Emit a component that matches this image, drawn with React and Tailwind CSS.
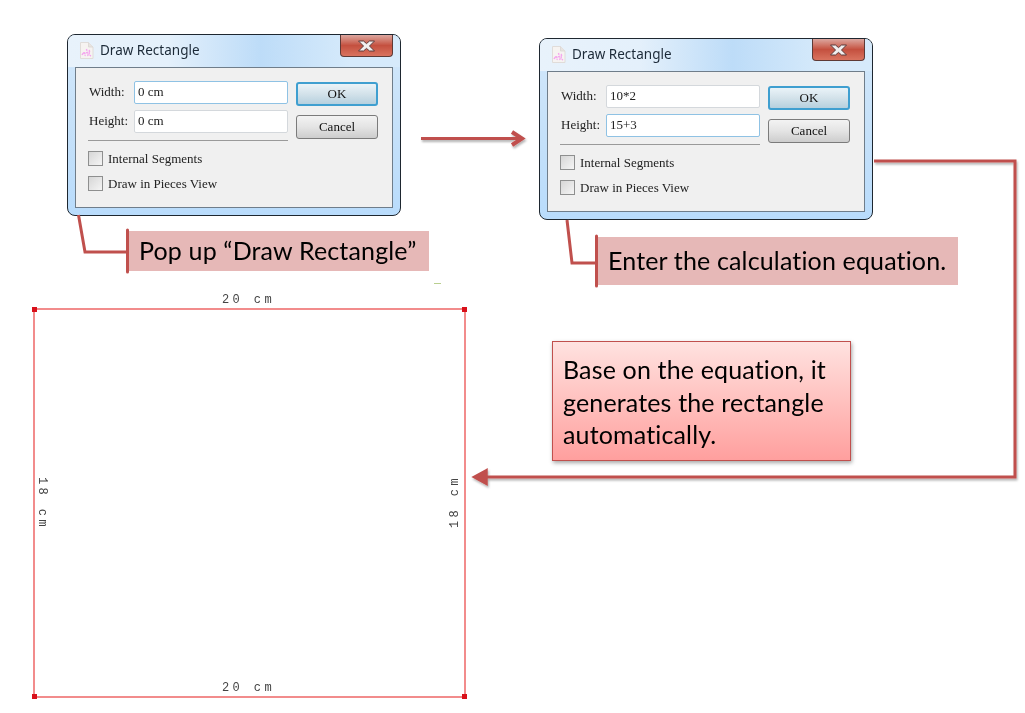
import React from "react";

function DocIcon() {
  return (
    <svg width="17" height="19" viewBox="0 0 17 19" className="shrink-0">
      <path d="M2.5 1.5 H10.5 L15 6 V17.5 H2.5 Z" fill="#f6f3f1" stroke="#e0dcd9" strokeWidth="1" />
      <path d="M10.5 1.5 V6 H15" fill="#e8e4e1" stroke="#d9d5d2" strokeWidth="0.8" />
      <path d="M4 14 C6 10 8 13 7 15 M8.5 8 L10 15 M11 9 C13 11 9 13 13 15 M5 12 L12 11" fill="none" stroke="#f4a6ee" strokeWidth="1.4" strokeDasharray="2 0.8" />
    </svg>
  );
}

function CloseGlyph() {
  return (
    <svg width="19" height="12" viewBox="0 0 19 12">
      <path
        d="M1.5 1 H6.5 L9.5 3.6 L12.5 1 H17.5 L12.5 6 L17.5 11 H12.5 L9.5 8.4 L6.5 11 H1.5 L6.5 6 Z"
        fill="#f1efef"
        stroke="#5b3a3a"
        strokeWidth="1"
        strokeLinejoin="round"
      />
    </svg>
  );
}

function Field({ label, value, focused }) {
  return (
    <div className="flex items-center">
      <span className="w-[46px] pb-[2px] pl-px text-[13px] text-[#222] font-['Liberation_Serif',serif]">{label}</span>
      <div
        className={
          "flex h-[23px] w-[154px] items-center rounded-[2px] border bg-white pb-px pl-[3px] text-[13px] text-[#222] font-['Liberation_Serif',serif] " +
          (focused ? "border-[#8fc2e4]" : "border-[#d4d8dc]")
        }
      >
        {value}
      </div>
    </div>
  );
}

function Check({ label }) {
  return (
    <div className="flex items-center gap-[5px]">
      <div className="size-[15px] border border-[#8e8f8f] bg-gradient-to-br from-[#d6d6d6] to-[#f5f5f5]" />
      <span className="text-[13px] leading-[15px] text-[#222] font-['Liberation_Serif',serif]">{label}</span>
    </div>
  );
}

function Button({ label, primary }) {
  return (
    <div
      className={
        "flex h-[24px] w-[82px] items-center justify-center rounded-[3px] text-[13px] text-[#111] font-['Liberation_Serif',serif] " +
        (primary
          ? "border-2 border-[#3f9fd0] bg-gradient-to-b from-[#eaf3f8] via-[#d3e2ea] to-[#b6d0de]"
          : "border border-[#7b7b7b] bg-gradient-to-b from-[#f3f3f3] via-[#e4e4e4] to-[#cdcdcd]")
      }
    >
      {label}
    </div>
  );
}

function Dialog({ className, width, height, widthFocused, heightFocused }) {
  return (
    <div
      className={
        "absolute flex h-[182px] w-[334px] flex-col overflow-hidden rounded-[8px] border border-[#1e2730] bg-gradient-to-b from-[#d3e8fb] via-[#c6e1f9] to-[#b9dcfc] pb-[7px] " +
        className
      }
    >
      <div className="relative flex h-[32px] shrink-0 items-center gap-[5px] bg-[linear-gradient(90deg,#e8f2fb,#e4f0fb_30%,#bddcf8_58%,#d6eafb_85%)] pb-[2px] pl-[10px]">
        <DocIcon />
        <span className="text-[13.5px] text-[#1c2a38] font-['Noto_Sans',sans-serif]">Draw Rectangle</span>
        <div className="absolute right-[7px] top-0 flex h-[22px] w-[53px] items-center justify-center rounded-b-[4px] border border-t-0 border-[#5e3a36] bg-gradient-to-b from-[#dba69f] via-[#c4503f] to-[#d9735f]">
          <CloseGlyph />
        </div>
      </div>
      <div className="mx-[7px] flex flex-1 gap-2 border border-[#6f7d8a] bg-[#f0f0f0] pl-[12px] pt-[13px]">
        <div className="flex w-[200px] flex-col">
          <div className="flex flex-col gap-[6px]">
            <Field label="Width:" value={width} focused={widthFocused} />
            <Field label="Height:" value={height} focused={heightFocused} />
          </div>
          <div className="mt-[7px] h-px bg-[#9a9a9a]" />
          <div className="mt-[10px] flex flex-col gap-[10px]">
            <Check label="Internal Segments" />
            <Check label="Draw in Pieces View" />
          </div>
        </div>
        <div className="mt-px flex flex-col gap-[9px]">
          <Button label="OK" primary />
          <Button label="Cancel" />
        </div>
      </div>
    </div>
  );
}

function Callout({ className, children }) {
  return (
    <div
      className={
        "absolute flex items-center bg-[#e6b8b7] pl-[13px] text-[25px] tracking-[0.15px] text-[#000] font-['Lato',sans-serif] " +
        className
      }
    >
      {children}
    </div>
  );
}

const RED = "#c0504d";

function Connectors() {
  return (
    <svg className="absolute inset-0" width="1025" height="713" viewBox="0 0 1025 713" fill="none">
      <defs>
        <filter id="sh" x="-5%" y="-5%" width="110%" height="110%">
          <feDropShadow dx="1" dy="2" stdDeviation="1.2" floodColor="#000" floodOpacity="0.3" />
        </filter>
      </defs>
      <g stroke={RED} strokeWidth="3" fill="none">
        <path d="M78.5 215 L85 252 L127 252" />
        <path d="M567 220 L572 263 L596 263" />
        <path d="M127.5 230 V272" strokeLinecap="round" />
        <path d="M596.5 236 V286" strokeLinecap="round" />
      </g>
      <g stroke={RED} strokeWidth="3" fill="none" filter="url(#sh)">
        <path d="M421 138.5 L522 138.5" />
        <path d="M512 132 L522 138.5 L512 145" strokeWidth="4" />
        <path d="M874 161 L1015 161 L1015 477 L478 477" />
        <path d="M486 471 L475 477 L486 483 Z" fill={RED} strokeWidth="3.5" />
      </g>
      <path d="M434 283.5 H441" stroke="#b9cf8f" strokeWidth="1" />
    </svg>
  );
}

function Corner({ className }) {
  return <div className={"absolute size-[5px] bg-[#d9101a] " + className} />;
}

const dim = "absolute text-[12px] leading-none tracking-[3.4px] text-[#444] whitespace-nowrap font-['Liberation_Mono',monospace] ";

function Shape() {
  return (
    <>
      <div className="absolute left-[33px] top-[308px] h-[390px] w-[433px] border-2 border-[#f28c8c]">
        <Corner className="-left-[3px] -top-[3px]" />
        <Corner className="-right-[3px] -top-[3px]" />
        <Corner className="-left-[3px] -bottom-[3px]" />
        <Corner className="-right-[3px] -bottom-[3px]" />
      </div>
      <span className={dim + "left-[222px] top-[294px]"}>20 cm</span>
      <span className={dim + "left-[222px] top-[682px]"}>20 cm</span>
      <span className={dim + "left-[36px] top-[477px] [writing-mode:vertical-rl]"}>18 cm</span>
      <span className={dim + "left-[449px] top-[475px] [writing-mode:vertical-rl] rotate-180"}>18 cm</span>
    </>
  );
}

export default function App() {
  return (
    <div className="relative h-[713px] w-[1025px] overflow-hidden bg-white blur-[0.3px]">
      <Shape />
      <Dialog className="left-[67px] top-[34px]" width="0 cm" height="0 cm" widthFocused />
      <Dialog className="left-[539px] top-[38px]" width="10*2" height="15+3" heightFocused />
      <Callout className="left-[126px] top-[231px] h-[40px] w-[303px]">Pop up “Draw Rectangle”</Callout>
      <Callout className="left-[595px] top-[237px] h-[48px] w-[363px]">Enter the calculation equation.</Callout>
      <div className="absolute left-[552px] top-[341px] h-[120px] w-[299px] border border-[#c0504d] bg-gradient-to-b from-[#ffe2e0] to-[#ff9f9e] px-[10px] pt-[11px] text-[25px] leading-[32.5px] tracking-[0.15px] text-black shadow-[1px_2px_4px_rgba(0,0,0,0.35)] font-['Lato',sans-serif]">
        Base on the equation, it generates the rectangle automatically.
      </div>
      <Connectors />
    </div>
  );
}
